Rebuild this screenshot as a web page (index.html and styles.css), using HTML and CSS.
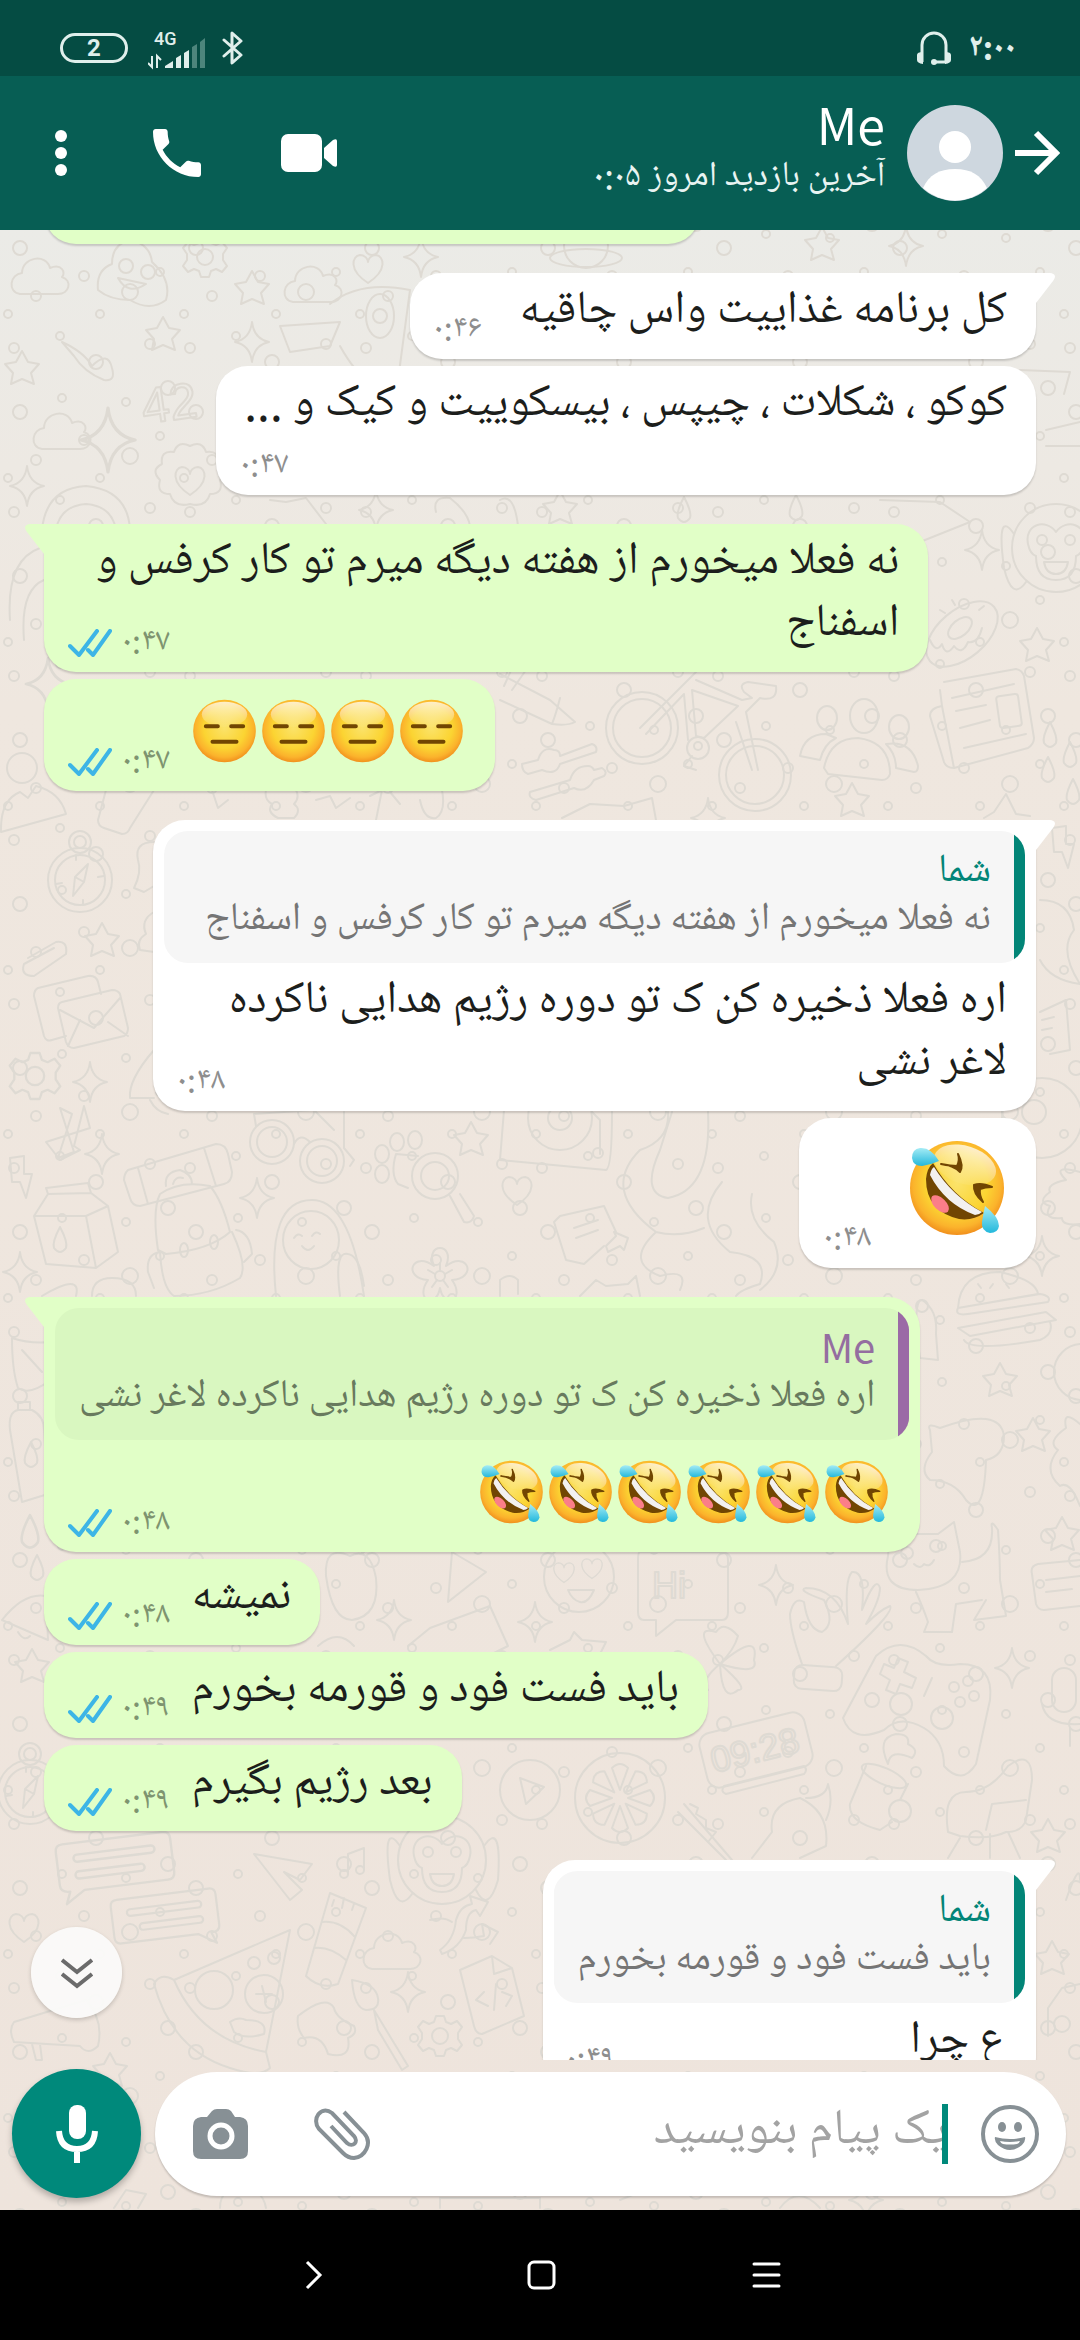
FILE: index.html
```html
<!DOCTYPE html>
<html lang="fa" dir="rtl">
<head>
  <meta charset="UTF-8">
  <meta name="viewport" content="width=device-width, initial-scale=1">
  <title>Me</title>
  <link rel="stylesheet" href="styles.css">
</head>
<body>

  <!-- shared symbols -->
  <svg class="defs" width="0" height="0" aria-hidden="true">
    <defs>
      <radialGradient id="face" cx="50%" cy="45%" r="55%">
        <stop offset="0" stop-color="#fbe36a"/>
        <stop offset="0.6" stop-color="#fbd432"/>
        <stop offset="0.85" stop-color="#fbb32c"/>
        <stop offset="1" stop-color="#f1901d"/>
      </radialGradient>
      <linearGradient id="shine" x1="0" y1="0" x2="0" y2="1">
        <stop offset="0" stop-color="#fff" stop-opacity="0.75"/>
        <stop offset="1" stop-color="#fff" stop-opacity="0.05"/>
      </linearGradient>
      <linearGradient id="tear" x1="0" y1="0" x2="0" y2="1">
        <stop offset="0" stop-color="#a5ecf5"/>
        <stop offset="1" stop-color="#23b8dc"/>
      </linearGradient>

      <symbol id="e-flat" viewBox="0 0 96 96">
        <circle cx="48" cy="48" r="47" fill="url(#face)"/>
        <ellipse cx="48" cy="23" rx="34" ry="19" fill="url(#shine)"/>
        <path d="M20 41h18M58 41h18M30 64h36" stroke="#714602" stroke-width="6" stroke-linecap="round"/>
      </symbol>
      <symbol id="e-rofl" viewBox="0 0 96 96">
        <circle cx="48" cy="48" r="47" fill="url(#face)"/>
        <ellipse cx="56" cy="25" rx="32" ry="19" fill="url(#shine)" transform="rotate(18 56 25)"/>
        <path d="M24 23Q42 55 75 73Q64 81 50 79Q17 71 17 39Q18 28 24 23Z" fill="#714602"/>
        <path d="M25 27Q43 56 73 72Q70 75 66 75Q36 64 21 35Q22 29 25 27Z" fill="#f3f1f0"/>
        <ellipse cx="31" cy="64" rx="11" ry="6" fill="#fb7e88" transform="rotate(44 31 64)"/>
        <path d="M32 24Q44 25 51 32Q55 26 49 14Q51 20 48 26Q42 26 32 24Z" fill="#714602" stroke="#714602" stroke-width="2" stroke-linejoin="round"/>
        <path d="M83 47Q72 42 65 45Q64 53 74 62Q70 55 71 49Q76 47 83 47Z" fill="#714602" stroke="#714602" stroke-width="2" stroke-linejoin="round"/>
        <path d="M30 21Q22 7 11 8Q3 9 3 18Q4 26 13 26Q21 25 30 21Z" fill="url(#tear)"/>
        <path d="M76 66Q90 77 90 86Q89 93 81 93Q72 91 73 82Q74 75 76 66Z" fill="url(#tear)"/>
      </symbol>
      <symbol id="ticks" viewBox="0 0 44 28">
        <path d="M2 17l9 9L29 2M20 21l5 5L42 2" fill="none" stroke="#3db5e6" stroke-width="4" stroke-linecap="round" stroke-linejoin="round"/>
      </symbol>

      <!-- wallpaper doodles, each centred on 0,0 -->
      <g id="star"><path d="M0-17L6-6 17-4 9 5 12 16 0 11-11 16-9 5-17-4-6-6Z"/></g>
      <g id="spark"><path d="M0-20Q2-3 17 0Q2 3 0 20Q-2 3-17 0Q-2-3 0-20Z"/></g>
      <g id="heart"><path d="M0 15C-20 2-16-12-8-13C-3-13 0-9 0-6C0-9 3-13 8-13C16-12 20 2 0 15Z"/></g>
      <g id="cloud"><path d="M-20 17C-33 15-30-3-18-4C-18-20 6-24 10-9C22-14 26-4 22 0C33 4 29 17 18 17Z"/></g>
      <g id="gear"><circle r="8"/><path d="M-4-20h8l2 6 5 2 6-3 5 6-4 6v6l4 6-5 6-6-3-5 2-2 6h-8l-2-6-5-2-6 3-5-6 4-6v-6l-4-6 5-6 6 3 5-2z"/></g>
      <g id="drop"><path d="M0-13Q8 2 6 8Q0 16-6 8Q-8 2 0-13Z"/></g>
      <g id="bolt"><path d="M-10-20L4-22 4-4 12-4 6 20 0 4-8 4Z"/></g>
      <g id="chat"><path d="M-42-20H42Q48-20 48-14V14Q48 20 42 20H-28L-44 30-40 20Q-48 20-48 14V-14Q-48-20-42-20Z"/><rect x="-34" y="-10" width="68" height="6" rx="3"/><rect x="-34" y="4" width="58" height="6" rx="3"/></g>
      <g id="compass"><circle r="32"/><circle r="25"/><circle cy="-38" r="6"/><circle cy="-38" r="11"/><path d="M8-16L4 2-7 16-5-3ZM-5-3L4 2M-4-25v5M-24 4l6-1M24-4l-6 1M3 25v-5"/></g>
      <g id="bloom"><circle r="5"/><path d="M-6-10C-16-34 16-34 6-10C28-26 38 2 12 4C26 24 4 34 0 12C-4 34-26 24-12 4C-38 2-28-26-6-10ZM0-5v-8M5-2l7-4M3 4l5 7M-3 4l-5 7M-5-2l-7-4"/></g>
      <g id="monkey"><circle r="44"/><path d="M0-16C-10-30-32-24-28-4Q-26 6-20 8Q-20 32 0 32Q20 32 20 8Q26 6 28-4C32-24 10-30 0-16Z"/><circle cx="-14" cy="-8" r="5"/><circle cx="14" cy="-8" r="5"/><path d="M-12 14H12Q10 26 0 26Q-10 26-12 14ZM-42-14Q-60-40-52 20Q-44 54-30 34M42-14Q60-40 56 20Q46 54 34 30"/></g>
      <pattern id="bubbles" width="176" height="164" patternUnits="userSpaceOnUse">
        <g class="doodle">
          <circle cx="14" cy="20" r="5"/><circle cx="60" cy="8" r="4"/><circle cx="96" cy="34" r="7"/>
          <circle cx="150" cy="16" r="5"/><circle cx="168" cy="60" r="7"/><circle cx="126" cy="74" r="4"/>
          <circle cx="20" cy="84" r="7"/><circle cx="62" cy="70" r="4"/><circle cx="84" cy="112" r="5"/>
          <circle cx="36" cy="132" r="5"/><circle cx="130" cy="128" r="8"/><circle cx="160" cy="108" r="4"/>
          <circle cx="100" cy="150" r="4"/><circle cx="8" cy="150" r="4"/>
        </g>
      </pattern>
    </defs>
  </svg>

  <div class="status">
    <div class="status-side">
      <time class="clock">۲:۰۰</time>
      <svg width="36" height="34" viewBox="0 0 36 34">
        <path d="M6 31V14a12 12 0 0 1 24 0v17M30 31H19" fill="none" stroke="#e0efec" stroke-width="3"/>
        <path d="M1 24q0-3 6-3v12q-6-1-6-4zM35 24q0-3-6-3v12q6-1 6-4z" fill="#e0efec"/>
        <circle cx="18" cy="31" r="3" fill="#e0efec"/>
      </svg>
    </div>
    <div class="status-side">
      <svg width="22" height="36" viewBox="0 0 22 36">
        <path d="M2 10l17 15-9 8V3l9 8L2 26" fill="none" stroke="#e0efec" stroke-width="3" stroke-linejoin="round" stroke-linecap="round"/>
      </svg>
      <svg class="signal" width="58" height="44" viewBox="0 -6 58 44">
        <text x="6" y="13">4G</text>
        <path d="M4 24v11l-4-4M9 36V24l4 4" fill="none" stroke="#e0efec" stroke-width="2"/>
        <path d="M17 36v-2l8-5v7zM28 36V26l5-3v13zM36 36V21l5-3v18z" fill="#e0efec"/>
        <path d="M44 36V15l5-3v24zM52 36V10l5-4v30z" fill="#4d857c"/>
      </svg>
      <div class="battery">2</div>
    </div>
  </div>

  <header class="header">
    <button class="btn" aria-label="بازگشت">
      <svg width="46" height="46" viewBox="0 0 46 46"><path d="M1 23h40M22 3l20 20-20 20" fill="none" stroke="#fff" stroke-width="6"/></svg>
    </button>
    <svg class="avatar" viewBox="0 0 96 96">
      <circle cx="48" cy="48" r="48" fill="#ced7df"/>
      <circle cx="48" cy="42" r="16" fill="#fff"/>
      <path d="M16 83C22 70 32 64 48 64s26 6 32 19A47 47 0 0 1 16 83Z" fill="#fff"/>
    </svg>
    <div class="contact">
      <h1 class="contact-name">Me</h1>
      <p class="contact-seen">آخرین بازدید امروز ۰:۰۵</p>
    </div>
    <div class="actions">
      <button class="btn btn-video" aria-label="تماس تصویری">
        <svg width="56" height="38" viewBox="0 0 56 38"><rect width="41" height="38" rx="7" fill="#fff"/><path d="M43 14L52 6q4-2 4 1v24q0 3-4 1l-9-8z" fill="#fff"/></svg>
      </button>
      <button class="btn" aria-label="تماس صوتی">
        <svg width="48" height="48" viewBox="3 3 18 18"><path d="M6.62 10.79c1.44 2.83 3.76 5.14 6.59 6.59l2.2-2.2c.27-.27.67-.36 1.02-.24 1.12.37 2.33.57 3.57.57.55 0 1 .45 1 1V20c0 .55-.45 1-1 1-9.39 0-17-7.61-17-17 0-.55.45-1 1-1h3.500c.55 0 1 .45 1 1 0 1.250.2 2.450.57 3.570.11.35.03.74-.25 1.020l-2.200 2.200z" fill="#fff"/></svg>
      </button>
      <button class="btn" aria-label="گزینه‌ها">
        <svg width="48" height="46" viewBox="0 0 48 46"><g fill="#fff"><circle cx="24" cy="6" r="6"/><circle cx="24" cy="23" r="6"/><circle cx="24" cy="40" r="6"/></g></svg>
      </button>
    </div>
  </header>

  <main class="chat">
    <svg class="wallpaper" viewBox="0 230 1080 1980" preserveAspectRatio="xMidYMin slice" aria-hidden="true">
      <rect y="230" width="1080" height="1980" fill="url(#bubbles)"/>
      <g class="doodle">
        <use href="#cloud" x="40" y="277"/><use href="#gear" x="205" y="257"/><use href="#cloud" x="313" y="285"/>
        <path d="M98 290Q96 270 112 264Q112 244 130 240Q150 244 152 262Q172 280 166 300Q150 312 130 300Q110 300 98 290ZM118 278Q128 296 146 284Z"/>
        <circle cx="126" cy="266" r="7"/><circle cx="148" cy="272" r="7"/>
        <use href="#heart" x="368" y="268"/><use href="#spark" x="421" y="257"/>
        <circle cx="586" cy="246" r="22"/><ellipse cx="586" cy="258" rx="36" ry="9"/>
        <use href="#star" x="252" y="288"/><use href="#star" x="163" y="334"/><use href="#spark" x="252" y="342"/>
        <use href="#star" x="22" y="368"/><use href="#star" x="822" y="244"/><use href="#spark" x="906" y="246"/>
        <path d="M62 342Q84 352 92 366Q108 350 112 368Q116 382 104 380Q84 372 74 356Z"/>
        <path d="M280 326L340 322 330 346 290 352ZM330 304Q360 280 410 290L398 380Q370 400 340 346"/>
        <ellipse cx="380" cy="316" rx="14" ry="22"/><circle cx="380" cy="316" r="7"/>
        <text x="144" y="424" transform="rotate(-8 144 424)" class="doodle-text big">42</text>
        <use href="#cloud" x="62" y="432"/><use href="#spark" transform="translate(108 440) scale(1.6)"/>
        <path d="M190 446q12-6 16 6q14-2 12 12q12 6 2 16q4 14-10 14q-4 14-20 10q-16 4-20-10q-14 0-10-14q-10-10 2-16q-2-14 12-12q4-12 16-6z"/>
        <use href="#heart" x="190" y="480"/><use href="#spark" x="27" y="486"/>
        <path d="M42 530Q46 488 86 486Q128 490 130 530M56 530Q60 506 86 504Q112 506 116 530M10 620Q6 560 40 548M24 640Q20 590 44 580"/>
        <path d="M270 500l16 2 20-4 20 26M436 512q-4-16 14-14q18 14 20 28M500 500q14-8 18 26M880 500l60 2 30 20-50 20"/>
        <use href="#spark" x="376" y="510"/><use href="#star" x="560" y="508"/><use href="#drop" x="684" y="510"/><use href="#drop" x="796" y="508"/>
        <use href="#spark" x="982" y="550"/><use href="#monkey" x="1056" y="548"/>
        <path d="M1046 430l34-8M1046 446h34M1020 370l50 2-6 22"/>
        <ellipse cx="962" cy="634" rx="42" ry="24" transform="rotate(-40 962 634)"/><ellipse cx="960" cy="628" rx="14" ry="8" transform="rotate(-40 960 628)"/>
        <path d="M930 640q6 14 12 4q4 14 12 2q8 10 14-4q10 2 14-14M940 610l5 3M952 600l3 5M984 606l-5 4"/>
        <use href="#star" x="1037" y="645"/>
        <use href="#spark" transform="translate(48 684) scale(1.3)"/>
        <circle cx="22" cy="768" r="15"/><path d="M1 832Q0 800 20 792L28 798 36 786Q60 792 66 814Z"/>
        <path d="M106 790L98 820Q98 826 104 828L122 834Q128 834 130 828L154 790M228 800l-10 8-6-18M266 790q-2 10 6 14q-6 8 6 14h16q8-8 0-14q6-6 2-14M316 800l14-4 6 12 14-10M370 796l12-6-6 30M390 792l10 12M420 800q4 20 16 18q10-6 6-28"/>
        <use href="#compass" x="80" y="880"/>
        <path d="M154 842Q134 842 138 860Q142 872 134 888L144 892 154 886M154 912Q140 920 146 934Q136 940 140 950L154 952"/>
        <path d="M28 958L56 942Q68 940 66 954L34 976Q20 976 24 964L54 948"/>
        <use href="#star" x="102" y="940"/>
        <path d="M38 988l50-12q8-1 10 6l3 12M38 988q-4 2-4 8l10 40q2 6 8 4l14-4M62 1002l50-12q6 0 8 4l8 34q0 6-4 8l-50 12q-6 0-8-6l-8-34q0-5 4-6zM60 1010l34 18 26-30M68 1046l12-26M128 1036l-20-14"/>
        <use href="#gear" transform="translate(35 1076) scale(1.15)"/><use href="#spark" x="90" y="1082"/>
        <path d="M154 1050Q128 1080 130 1098L154 1098M150 1100Q156 1112 168 1114"/>

        <path d="M500 674L550 700 575 722Q568 726 552 724L500 700M552 724Q556 714 560 698M512 690l14-20M504 686l10-22"/>
        <path d="M522 764l16-4q4-14 16-10q6 0 6 6l32-12q6 2 4 8l-36 12q-4 12-18 6l-14 4q-6-2-6-10zM530 792l40-12q4-14 18-14q4 0 6 4l8-2q6 4 2 8l-10 4q-8 14-20 8l-38 12q-8-2-6-8z"/>
        <circle cx="642" cy="728" r="36"/><circle cx="642" cy="728" r="29"/><circle cx="755" cy="775" r="36"/><circle cx="755" cy="775" r="29"/>
        <path d="M640 728L700 668M646 734L684 694 688 740M692 690L738 706 704 738 696 736ZM752 770L736 722M758 770L746 712 760 698Q778 702 776 686L748 682Q738 684 744 692L752 698 742 700 696 680"/>
        <circle cx="698" cy="748" r="11"/><circle cx="698" cy="746" r="4"/><path d="M692 756l-8 10 12 4"/>
        <ellipse cx="827" cy="718" rx="10" ry="12"/><ellipse cx="864" cy="716" rx="14" ry="17"/><ellipse cx="899" cy="727" rx="10" ry="12"/>
        <path d="M824 768Q830 738 858 738Q890 742 890 774Q888 780 882 780L828 774ZM800 756Q804 734 826 734L836 738Q824 744 820 760ZM886 744Q912 740 918 766 918 772 914 772L896 768Q896 754 886 744Z"/>
        <path d="M944 682L1016 669Q1022 670 1024 676L1034 738Q1034 744 1028 748L954 768Q946 768 944 762L930 716Q930 708 942 706M942 706L940 690M942 706L954 768"/>
        <rect x="998" y="695" width="22" height="32" rx="3" transform="rotate(-8 1009 711)"/>
        <path d="M952 698l62-14M956 711l30-6M960 728l30-8M964 748l62-14"/>
        <use href="#drop" x="1050" y="735"/><use href="#drop" x="1048" y="770"/><use href="#drop" x="1070" y="755"/><use href="#drop" x="1073" y="792"/>
        <use href="#star" x="852" y="800"/><use href="#spark" x="708" y="818"/><path d="M562 818l28-14 34 2 28-8 4 22M984 818l10-6 12-18 10 20 14 2"/>
        <use href="#bolt" x="1062" y="848"/><path d="M1040 900Q1070 900 1074 930Q1058 950 1080 984Q1050 980 1040 960"/>
        <path d="M1040 1012l26-12 4 50-20 4M1042 1020l12-3M1042 1030l10-2"/><circle cx="1042" cy="1118" r="40"/><circle cx="1034" cy="1112" r="12"/>
        <path d="M1080 1172q-30-8-14 8q-20 4-16 12q-14 10 0 14q-8 14 12 12q0 8 18 6"/><use href="#spark" x="1042" y="1256"/>

        <use href="#bolt" x="20" y="1178"/>
        <path d="M60 1108l14 44-16 6 14-44zM46 1142l44-14-6-22-10 40 6 4-20 10z"/><use href="#spark" x="102" y="1154"/>
        <path d="M128 1170L216 1144Q226 1144 228 1154L232 1172Q232 1182 224 1184L140 1206Q132 1206 130 1198L124 1180Q124 1174 128 1170ZM138 1168l10 36M204 1148l12 38M166 1186Q164 1172 180 1170Q192 1174 192 1184M173 1184q2-8 10-6"/>
        <path d="M46 1188L88 1183 91 1193 108 1206 118 1252 96 1268 46 1264 34 1216 48 1194ZM48 1194L91 1193M34 1216L86 1216 108 1206M86 1216L96 1268"/><use href="#drop" x="60" y="1240"/>
        <path d="M158 1250Q152 1210 160 1194Q180 1180 210 1186Q222 1200 230 1232Q210 1250 166 1254ZM160 1252Q162 1288 174 1296Q210 1296 240 1278Q248 1266 232 1232M160 1252Q146 1254 148 1272L154 1288M236 1230Q250 1232 252 1254L244 1262"/>
        <ellipse cx="184" cy="1250" rx="4" ry="7"/><ellipse cx="214" cy="1242" rx="4" ry="7"/>
        <use href="#spark" transform="translate(257 1198)"/>
        <circle cx="272" cy="1142" r="22"/><circle cx="272" cy="1142" r="15"/><circle cx="322" cy="1161" r="22"/><circle cx="322" cy="1161" r="15"/>
        <path d="M256 1126l-2-12 60-4 20 20M294 1144q6-12 16-2M344 1112v36l10 12-4 6"/>
        <path d="M276 1296Q266 1200 312 1200Q350 1200 364 1296"/><ellipse cx="311" cy="1240" rx="28" ry="29"/><path d="M294 1238q4-6 8-2M312 1236q4-6 8-2M302 1246q6 8 12 0M340 1296Q334 1250 348 1254Q360 1256 364 1286"/>
        <circle cx="435" cy="1176" r="23"/><circle cx="435" cy="1176" r="14"/><path d="M450 1196l14 26q8 2 10-6l-14-22M418 1156l-22-2q-6 20 2 30l10 4"/>
        <ellipse cx="382" cy="1154" rx="7" ry="9"/><ellipse cx="397" cy="1142" rx="7" ry="9"/><ellipse cx="415" cy="1140" rx="7" ry="9"/><ellipse cx="382" cy="1174" rx="7" ry="9"/>
        <use href="#star" x="471" y="1139"/><path d="M504 1110L500 1160 606 1170Q612 1168 612 1112M592 1112l8 8v34"/><circle cx="560" cy="1118" r="32"/><circle cx="560" cy="1118" r="12"/><circle cx="598" cy="1153" r="5"/>
        <use href="#heart" x="517" y="1190"/><use href="#bloom" x="440" y="1276"/>
        <path d="M560 1216L604 1206 616 1232M604 1246L584 1264 566 1260 554 1222 560 1216M574 1228l24-8M576 1238l22-8M606 1246l10-10-2-4 14 6-4 12-4-4-12 6z"/>
        <path d="M668 1112Q670 1140 640 1150Q600 1190 656 1232M708 1112Q712 1190 668 1198Q640 1194 660 1150L672 1112M656 1232Q624 1262 660 1276Q690 1268 680 1290M656 1232Q680 1238 704 1228M722 1182Q690 1220 730 1252Q770 1256 760 1284 740 1290 736 1296M752 1194Q746 1220 774 1242Q786 1270 760 1290"/>
        <use href="#spark" transform="translate(20 1272)"/><path d="M580 1296l16-16 10 6 22-2 8-8 4 20M500 1296v-16q10-8 18 0v14M42 1296q40-24 34 0M92 1296q0-18 20-18q24 0 24 18"/>

        <path d="M12 1338Q30 1344 50 1342V1380Q30 1396 18 1388Q12 1370 12 1338ZM22 1350l20 22"/>
        <path d="M10 1430Q8 1412 18 1410V1410H32Q44 1416 44 1430L48 1494 22 1502ZM18 1410v-8h12v8"/><use href="#drop" x="31" y="1455"/><use href="#drop" transform="translate(30 1532) scale(1.3)"/><use href="#drop" x="37" y="1568"/>
        <path d="M2 1620Q24 1592 46 1596L48 1640ZM18 1632q6 10 12 4"/><use href="#star" x="32" y="1666"/><use href="#compass" x="30" y="1792"/>
        <path d="M350 1556Q324 1544 326 1576Q332 1620 352 1620Q380 1616 376 1578Q370 1546 350 1556ZM362 1554q-2-16 6-16q4 8-6 16M452 1552L486 1572 448 1602ZM408 1646l22-18 60-22 18 40-20 10"/>
        <use href="#spark" x="394" y="1620"/><use href="#spark" x="535" y="1622"/><path d="M318 1646q20-18 36 0"/>

        <path d="M958 1308Q960 1272 1000 1272Q1036 1280 1038 1294ZM958 1308L1040 1294Q1052 1296 1048 1302L968 1314Q954 1316 958 1308ZM958 1328L1046 1312 1056 1320 970 1336Z M964 1340Q970 1352 1040 1340Q1054 1334 1050 1322"/>
        <path d="M978 1284l3 4M990 1288l3-4M1006 1284l3 4"/><path d="M920 1358Q912 1300 922 1300Q938 1310 936 1334L938 1360Z"/><circle cx="922" cy="1306" r="6"/>
        <use href="#star" x="1000" y="1380"/><circle cx="1082" cy="1372" r="28"/><use href="#star" x="1033" y="1435"/>
        <path d="M930 1430Q926 1422 940 1428Q1000 1406 1004 1436Q1004 1456 986 1460Q984 1520 966 1500Q954 1480 930 1480Q918 1470 932 1452Z"/>
        <path d="M1080 1424q-18-16-14 4q-20 14-8 22q-16 20 2 36q10-6 20 20"/><use href="#star" x="1062" y="1534"/>
        <circle cx="579" cy="1577" r="35"/><use href="#heart" transform="translate(564 1572) scale(.7)"/><use href="#heart" transform="translate(592 1568) scale(.7)"/><path d="M568 1590h26q-6 14-14 12q-8-2-12-12z"/>
        <path d="M640 1552h82q6 0 6 8v52q0 8-6 8h-46l-20 16v-16h-12q-6 0-6-8v-52q0-8 2-8z"/><text x="652" y="1598" class="doodle-text">Hi</text>
        <use href="#spark" x="776" y="1585"/><path d="M550 1650l20-10 4-8 8 8 24 2-6 12"/>
        <path d="M802 1664Q790 1630 790 1614Q794 1596 804 1602Q808 1630 822 1632Q836 1624 824 1600Q796 1590 806 1588Q836 1588 848 1624Q844 1580 852 1572Q866 1570 862 1610Q876 1574 880 1588Q880 1600 866 1624Q880 1610 890 1606Q896 1612 836 1666"/>
        <rect x="794" y="1666" width="48" height="24" rx="8" transform="rotate(4 818 1678)"/>
        <path d="M888 1556Q880 1590 918 1590Q964 1588 960 1552L954 1522 938 1534H904L890 1530ZM962 1562Q994 1560 992 1528Q990 1518 998 1530Q1000 1560 1000 1580L1006 1616 974 1620 986 1600M916 1592Q924 1610 928 1622L924 1632 952 1632 956 1604 982 1600"/>
        <circle cx="907" cy="1553" r="6"/><circle cx="936" cy="1546" r="6"/><path d="M914 1564q6 6 10 0q6 4 10-4"/>
        <path d="M1080 1560l-42 4q-8 2-6 10l4 30q2 6 8 6l36-4M1046 1580l34-4M1046 1592l26-3"/>
        <path d="M720 1664Q690 1624 716 1632Q724 1620 738 1636Q734 1650 720 1664Q760 1630 754 1660Q760 1676 720 1664Q750 1690 738 1690Q722 1704 720 1664Q700 1680 708 1690"/>
        <path d="M843 1718L876 1656Q900 1634 926 1656Q936 1668 960 1664Q994 1664 990 1700L976 1764Q962 1786 944 1766Q944 1740 924 1728Q900 1714 884 1730Q852 1744 843 1718Z"/>
        <path d="M898 1658l10 4-4 10 12 6-4 10-12-4-4 10-10-4 4-10-10-6 4-10 10 4z"/><circle cx="901" cy="1704" r="11"/><circle cx="942" cy="1718" r="11"/><circle cx="954" cy="1687" r="5"/><circle cx="968" cy="1681" r="5"/><circle cx="960" cy="1702" r="5"/><circle cx="974" cy="1696" r="5"/><path d="M932 1678l-8 18"/>
        <use href="#spark" x="1012" y="1668"/><rect x="1052" y="1668" width="24" height="44" rx="12"/><path d="M1042 1704Q1046 1726 1080 1724M1070 1728v18"/>
        <rect x="702" y="1722" width="108" height="56" rx="12" transform="rotate(-14 756 1750)"/><text x="714" y="1773" transform="rotate(-14 714 1773)" class="doodle-text">09:28</text><path d="M724 1786l80-20q4 4 0 8l-78 20q-6-2-2-8z"/>
        <path d="M866 1766L850 1804Q848 1822 880 1830L892 1822M908 1784L900 1800"/><ellipse cx="884" cy="1776" rx="24" ry="8" transform="rotate(24 884 1776)"/><circle cx="900" cy="1811" r="11"/><path d="M888 1764Q876 1738 896 1734Q910 1734 908 1744Q920 1750 912 1758Q890 1748 888 1764"/>
        <circle cx="620" cy="1798" r="45"/>
        <g id="slices"><path d="M620 1790L612 1768Q620 1760 628 1768ZM620 1806L612 1828Q620 1836 628 1828ZM612 1798L590 1790Q582 1798 590 1806ZM628 1798L650 1790Q658 1798 650 1806Z"/><path transform="rotate(45 620 1798)" d="M620 1790L612 1768Q620 1760 628 1768ZM620 1806L612 1828Q620 1836 628 1828ZM612 1798L590 1790Q582 1798 590 1806ZM628 1798L650 1790Q658 1798 650 1806Z"/></g>
        <circle cx="530" cy="1790" r="30"/><path d="M520 1778L544 1787 526 1804Z"/>
        <path d="M678 1812l48 48M684 1804l48 56M690 1804l8 4-2 6 10 6 0 8 10 4-8 10"/>
        <path d="M772 1832Q768 1804 800 1798Q830 1812 826 1846L800 1858M772 1832l-20 26M806 1798q20 0 22-14q6 18-2 36"/>
        <path d="M948 1832Q942 1792 966 1792Q990 1792 1008 1766Q1032 1748 1032 1780L1026 1820Q1022 1832 1006 1832Q990 1840 960 1836ZM986 1830L992 1804 1026 1800M960 1838l-12 20M990 1834v24M1008 1832l12 26"/>
        <use href="#star" x="1048" y="1836"/>

        <use href="#monkey" x="442" y="1860"/>
        <use href="#chat" transform="translate(115 1862) rotate(-7) scale(1.2)"/><use href="#chat" transform="translate(165 1916) rotate(-7) scale(-1.1 1.1)"/>
        <path d="M254 1854L312 1864 300 1880 284 1872 302 1890 290 1900ZM348 1874V1854L364 1848V1870"/><circle cx="344" cy="1874" r="4"/><circle cx="360" cy="1870" r="4"/>
        <path d="M330 1893L366 1908 338 1984Q320 1990 306 1976ZM322 1922Q340 1920 354 1936M314 1948Q330 1946 346 1960M334 1900l-2 6M344 1898l-2 10M354 1904l-2 6"/>
        <path d="M440 1950Q454 1940 456 1920Q460 1906 472 1904L470 1896 488 1902 480 1916 476 1910Q466 1912 466 1930Q460 1948 442 1954ZM430 1920Q444 1916 452 1922M464 1938Q474 1938 484 1936L482 1924 498 1932 490 1944"/>
        <use href="#cloud" transform="translate(392 1952)"/><path d="M174 1980L290 1930 266 2052Q200 2040 174 1980ZM174 1980Q160 1972 154 1984Q172 2050 230 2068Q260 2078 270 2068L266 2052"/>
        <circle cx="214" cy="1990" r="19"/><circle cx="264" cy="1994" r="19"/><path d="M256 1994h16M262 1986l4 16M230 2022q8-6 16-2q22 0 18 14q-20 6-30-2z"/><circle cx="254" cy="1963" r="6"/><circle cx="274" cy="1958" r="6"/>
        <path d="M298 2016Q326 1994 334 2008Q336 2018 354 2026Q358 2034 348 2038Q352 2060 328 2054Q322 2034 304 2038Q296 2028 298 2016ZM352 1980Q376 1984 378 1998Q380 2010 366 2010Q354 2008 352 1980ZM374 2010L408 2066 402 2070 378 2030Z"/>
        <use href="#spark" x="408" y="1992"/><use href="#gear" x="440" y="2036"/><path d="M460 1970L492 1956 512 1968 524 2016 482 2034Q476 2034 474 2026ZM492 1956L494 1974 512 1968M484 1992l-8 8 12 6M496 1984l-2 26M502 1992l10 4-6 10"/>
        <use href="#heart" x="24" y="1927"/><path d="M14 2022L86 2000Q104 2020 98 2046Q88 2056 80 2046L14 2042Q8 2030 14 2022ZM32 2044l4 16h6l-2-16"/><use href="#star" x="110" y="2070"/>
        <path d="M1066 1900q14-40 14-20M1048 2036v-28l14-20 18-4"/><use href="#star" x="1052" y="1958"/><circle cx="1062" cy="2024" r="8"/>
        <path d="M114 2208l12-18 20 4-8 14M220 2208q0-22 22-14q20-8 24 14M440 2208v-10h100v10M620 2200l20-8M780 2208q18-24 40 0"/><use href="#spark" x="866" y="2200"/>
      </g>
    </svg>

    <section class="messages">
      <article class="msg out group-end tall-start"></article>

      <article class="msg in tail">
        <div class="content">
          <p class="text">کل برنامه غذاییت واس چاقیه</p>
          <div class="meta"><time>۰:۴۶</time></div>
        </div>
      </article>
      <article class="msg in group-end">
        <div class="content below">
          <p class="text">کوکو ، شکلات ، چیپس ، بیسکوییت و کیک و ...</p>
          <div class="meta"><time>۰:۴۷</time></div>
        </div>
      </article>

      <article class="msg out tail">
        <div class="content overlap">
          <p class="text">نه فعلا میخورم از هفته دیگه میرم تو کار کرفس و<br>اسفناج</p>
          <div class="meta"><time>۰:۴۷</time><svg class="ticks"><use href="#ticks"/></svg></div>
        </div>
      </article>
      <article class="msg out group-end">
        <div class="content">
          <p class="emojis" role="img" aria-label="😑😑😑😑">
            <svg><use href="#e-flat"/></svg><svg><use href="#e-flat"/></svg><svg><use href="#e-flat"/></svg><svg><use href="#e-flat"/></svg>
          </p>
          <div class="meta"><time>۰:۴۷</time><svg class="ticks"><use href="#ticks"/></svg></div>
        </div>
      </article>

      <article class="msg in tail">
        <blockquote class="quote wide">
          <cite>شما</cite>
          <p>نه فعلا میخورم از هفته دیگه میرم تو کار کرفس و اسفناج</p>
        </blockquote>
        <div class="content overlap">
          <p class="text">اره فعلا ذخیره کن ک تو دوره رژیم هدایی ناکرده<br>لاغر نشی</p>
          <div class="meta"><time>۰:۴۸</time></div>
        </div>
      </article>
      <article class="msg in group-end">
        <div class="content">
          <p class="emojis large" role="img" aria-label="🤣"><svg><use href="#e-rofl"/></svg></p>
          <div class="meta"><time>۰:۴۸</time></div>
        </div>
      </article>

      <article class="msg out tail">
        <blockquote class="quote purple">
          <cite>Me</cite>
          <p>اره فعلا ذخیره کن ک تو دوره رژیم هدایی ناکرده لاغر نشی</p>
        </blockquote>
        <div class="content">
          <p class="emojis" role="img" aria-label="🤣🤣🤣🤣🤣🤣">
            <svg><use href="#e-rofl"/></svg><svg><use href="#e-rofl"/></svg><svg><use href="#e-rofl"/></svg><svg><use href="#e-rofl"/></svg><svg><use href="#e-rofl"/></svg><svg><use href="#e-rofl"/></svg>
          </p>
          <div class="meta"><time>۰:۴۸</time><svg class="ticks"><use href="#ticks"/></svg></div>
        </div>
      </article>
      <article class="msg out">
        <div class="content">
          <p class="text">نمیشه</p>
          <div class="meta"><time>۰:۴۸</time><svg class="ticks"><use href="#ticks"/></svg></div>
        </div>
      </article>
      <article class="msg out">
        <div class="content">
          <p class="text">باید فست فود و قورمه بخورم</p>
          <div class="meta"><time>۰:۴۹</time><svg class="ticks"><use href="#ticks"/></svg></div>
        </div>
      </article>
      <article class="msg out group-end">
        <div class="content">
          <p class="text">بعد رژیم بگیرم</p>
          <div class="meta"><time>۰:۴۹</time><svg class="ticks"><use href="#ticks"/></svg></div>
        </div>
      </article>

      <article class="msg in tail">
        <blockquote class="quote">
          <cite>شما</cite>
          <p>باید فست فود و قورمه بخورم</p>
        </blockquote>
        <div class="content">
          <p class="text">ع چرا</p>
          <div class="meta"><time>۰:۴۹</time></div>
        </div>
      </article>

      <button class="scroll-down" aria-label="رفتن به پایین">
        <svg width="32" height="32" viewBox="0 0 32 32"><path d="M1 3l15 12L31 3M1 17l15 12 15-12" fill="none" stroke="#6b6b6b" stroke-width="4"/></svg>
      </button>
    </section>

    <form class="composer">
      <div class="field">
        <button type="button" class="btn" aria-label="شکلک">
          <svg width="58" height="58" viewBox="0 0 58 58">
            <circle cx="29" cy="29" r="27" fill="none" stroke="#879095" stroke-width="4"/>
            <ellipse cx="21" cy="22" rx="4" ry="5" fill="#879095"/><ellipse cx="37" cy="22" rx="4" ry="5" fill="#879095"/>
            <path d="M14 32q15 4 30 0q1 4-3 8q-12 10-24 0q-4-4-3-8z" fill="#879095"/>
            <path d="M19 36q10 2 20 0q-1 3-3 3q-7 1-14 0q-2 0-3-3z" fill="#fff"/>
          </svg>
        </button>
        <div class="entry">
          <input type="text" placeholder="یک پیام بنویسید" aria-label="یک پیام بنویسید">
          <span class="caret"></span>
        </div>
        <button type="button" class="btn" aria-label="پیوست">
          <svg width="58" height="54" viewBox="0 0 58 54">
            <path d="M31 5l20 21c9 10 1 24-10 25-5 0-8-2-11-5L6 22C-2 12 8-2 19 6l22 23c5 6-1 12-7 7L18 19" fill="none" stroke="#879095" stroke-width="4"/>
          </svg>
        </button>
        <button type="button" class="btn btn-camera" aria-label="دوربین">
          <svg width="55" height="52" viewBox="0 0 55 52">
            <path d="M8 9h6l5-6q2-2 5-2h9q3 0 5 2l4 6h5q8 1 8 9v25q0 8-8 8H8q-8 0-8-8V18q0-8 8-9z" fill="#879095"/>
            <circle cx="28" cy="28" r="11" fill="none" stroke="#fff" stroke-width="5"/>
          </svg>
        </button>
      </div>
      <button type="button" class="mic" aria-label="پیام صوتی">
        <svg width="42" height="58" viewBox="0 0 42 58">
          <rect x="13" width="17" height="34" rx="8" fill="#fff"/>
          <path d="M3 26q1 18 18 18t18-18M21 44v14" fill="none" stroke="#fff" stroke-width="6"/>
        </svg>
      </button>
    </form>
  </main>

  <nav class="nav">
    <button class="btn" aria-label="برنامه‌ها"><svg width="56" height="30" viewBox="0 0 56 30"><path d="M16 4h25M16 15h25M16 26h25" stroke="#fff" stroke-width="3" stroke-linecap="round"/></svg></button>
    <button class="btn" aria-label="خانه"><svg width="56" height="30" viewBox="0 0 56 30"><rect x="17" y="2" width="25" height="26" rx="5" fill="none" stroke="#fff" stroke-width="3"/></svg></button>
    <button class="btn" aria-label="بازگشت"><svg width="56" height="30" viewBox="0 0 56 30"><path d="M21 2l13 13-13 13" fill="none" stroke="#fff" stroke-width="3"/></svg></button>
  </nav>

</body>
</html>
```
FILE: styles.css
```css
* {
  box-sizing: border-box;
}

body {
  margin: 0;
  height: 100vh;
  display: flex;
  flex-direction: column;
  font-family: "Noto Sans CJK SC", "Noto Naskh Arabic UI", "Noto Naskh Arabic", "DejaVu Sans Condensed", sans-serif;
  background: #000;
  overflow: hidden;
}

h1, p, blockquote {
  margin: 0;
  font-weight: normal;
}

svg {
  display: block;
  flex: none;
}

.defs {
  position: absolute;
}

.btn {
  display: flex;
  align-items: center;
  justify-content: center;
  padding: 0;
  border: none;
  background: none;
  cursor: pointer;
}

/* status bar */
.status {
  display: flex;
  justify-content: space-between;
  align-items: center;
  height: 76px;
  padding: 20px 64px 0 60px;
  background: #054c43;
  color: #e0efec;
}

.status-side {
  display: flex;
  align-items: center;
  gap: 16px;
}

.clock {
  font-size: 32px;
  line-height: 36px;
  padding-bottom: 4px;
  font-weight: bold;
}

.signal {
  margin-left: 4px;
}

.signal text {
  font: 500 18px Roboto, sans-serif;
  fill: #e0efec;
  direction: ltr;
}

.battery {
  width: 68px;
  height: 30px;
  border: 3px solid #e0efec;
  border-radius: 15px;
  font: bold 24px/24px Roboto, sans-serif;
  text-align: center;
}

/* header */
.header {
  display: flex;
  align-items: center;
  height: 154px;
  padding: 0 20px 0 37px;
  background: #075e54;
  color: #fff;
}

.avatar {
  width: 96px;
  height: 96px;
  margin-right: 11px;
}

.contact {
  flex: 1;
  margin-right: 22px;
  padding-bottom: 14px;
}

.contact-name {
  font-size: 50px;
  line-height: 58px;
}

.contact-seen {
  font-size: 35px;
  line-height: 46px;
  color: #e8f4f2;
}

.actions {
  display: flex;
  gap: 68px;
}

.btn-video {
  width: 80px;
}

/* chat */
.chat {
  position: relative;
  flex: 1;
  min-height: 0;
  display: flex;
  flex-direction: column;
  background: linear-gradient(#ebebe7, #efe7df 24%, #eee4dc);
}

.wallpaper {
  position: absolute;
  top: 0;
  left: 0;
  width: 100%;
  height: 100%;
}

.doodle {
  fill: none;
  stroke: #dedad3;
  stroke-width: 2;
  stroke-linejoin: round;
  stroke-linecap: round;
}

.doodle-text {
  font: 36px "Liberation Sans", sans-serif;
  direction: ltr;
}

.doodle-text.big {
  font-size: 50px;
}

.messages {
  position: relative;
  flex: 1;
  min-height: 0;
  display: flex;
  flex-direction: column;
  align-items: flex-start;
  gap: 7px;
  padding: 0 44px;
  overflow: hidden;
}

.msg {
  position: relative;
  flex: none;
  border-radius: 32px;
  background: #fff;
  color: #1c1e1c;
  box-shadow: 0 2px 2px rgba(0, 0, 0, 0.16);
}

.msg.out {
  align-self: flex-end;
  background: #e1ffc7;
}

.group-end {
  margin-bottom: 22px;
}

/* bubble scrolled almost out of view */
.tall-start {
  width: 656px;
  height: 86px;
  margin-top: -72px;
}

.in.tail {
  border-top-right-radius: 0;
}

.out.tail {
  border-top-left-radius: 0;
}

.tail::before {
  content: "";
  position: absolute;
  top: 0;
  left: 100%;
  width: 20px;
  height: 30px;
  background: inherit;
  clip-path: path("M0 0H14Q22 1 17 8L0 30Z");
}

.out.tail::before {
  left: auto;
  right: 100%;
  clip-path: path("M20 0H6Q-2 1 3 8L20 30Z");
}

.content {
  display: flex;
  justify-content: space-between;
  align-items: flex-end;
  gap: 38px;
  padding: 4px 29px 12px 24px;
}

.out .content {
  gap: 22px;
}

.content.below {
  flex-direction: column;
  align-items: stretch;
  gap: 0;
}

.below .text {
  padding-left: 4px;
}

.below .meta {
  align-self: flex-end;
  height: 43px;
}

.content.overlap {
  display: grid;
  grid-template-columns: 1fr;
}

.overlap .text,
.overlap .meta {
  grid-area: 1 / 1;
}

.overlap .text {
  padding-left: 28px;
}

.overlap .meta {
  justify-self: end;
  align-self: end;
}

.text {
  padding-bottom: 8px;
  font-size: 46px;
  line-height: 62px;
  white-space: nowrap;
}

.meta {
  display: flex;
  align-items: flex-end;
  gap: 10px;
  color: #8e8e8e;
}

.out .meta {
  color: #7e9470;
}

.meta time {
  font-size: 32px;
  line-height: 40px;
}

.ticks {
  width: 44px;
  height: 28px;
  margin-bottom: 3px;
}

.emojis {
  display: flex;
  gap: 4px;
  padding: 16px 2px 16px 0;
}

.emojis svg {
  width: 65px;
  height: 64px;
}

.emojis.large {
  padding: 18px 2px 20px 0;
}

.emojis.large svg {
  width: 96px;
  height: 96px;
}

.quote {
  margin: 0 11px;
  padding: 14px 23px 22px 24px;
  border-right: 11px solid #028577;
  background: #f6f6f6;
  color: #757575;
  font-size: 39px;
  line-height: 48px;
  white-space: nowrap;
  clip-path: inset(0 round 24px);
}

.msg:has(.quote) {
  padding-top: 11px;
}

.quote.wide {
  padding-left: 41px;
}

.quote cite {
  display: block;
  font-style: normal;
  font-size: 40px;
  color: #028577;
}

.quote.purple {
  border-color: #9b6aa6;
  background-color: #d9f7c0;
  color: #687a5e;
}

.purple cite {
  color: #946ea0;
}

.scroll-down {
  position: absolute;
  left: 31px;
  bottom: 42px;
  width: 91px;
  height: 91px;
  display: flex;
  align-items: center;
  justify-content: center;
  border: none;
  border-radius: 50%;
  background: rgba(251, 251, 250, 0.93);
  box-shadow: 0 2px 4px rgba(0, 0, 0, 0.18);
}

/* composer */
.composer {
  position: relative;
  display: flex;
  align-items: center;
  gap: 14px;
  padding: 9px 14px 12px 12px;
}

.field {
  flex: 1;
  display: flex;
  align-items: center;
  height: 124px;
  padding: 0 27px 0 38px;
  border-radius: 62px;
  background: #fff;
  box-shadow: 0 2px 2px rgba(0, 0, 0, 0.18);
}

.entry {
  position: relative;
  flex: 1;
  margin: 0 33px 0 40px;
}

.entry input {
  display: block;
  width: 100%;
  height: 84px;
  padding: 0 0 12px;
  border: none;
  outline: none;
  background: none;
  font: inherit;
  font-size: 50px;
  color: #1c1e1c;
}

.entry input::placeholder {
  color: #a3a3a3;
  opacity: 1;
}

.caret {
  position: absolute;
  top: 12px;
  right: 0;
  width: 6px;
  height: 60px;
  background: #00897b;
}

.btn-camera {
  margin-right: 65px;
}

.mic {
  width: 129px;
  height: 129px;
  display: flex;
  align-items: center;
  justify-content: center;
  border: none;
  border-radius: 50%;
  background: #00897b;
  box-shadow: 0 4px 6px rgba(0, 0, 0, 0.25);
}

/* android navigation */
.nav {
  display: flex;
  justify-content: center;
  align-items: center;
  gap: 170px;
  height: 130px;
  background: #000;
}
```
